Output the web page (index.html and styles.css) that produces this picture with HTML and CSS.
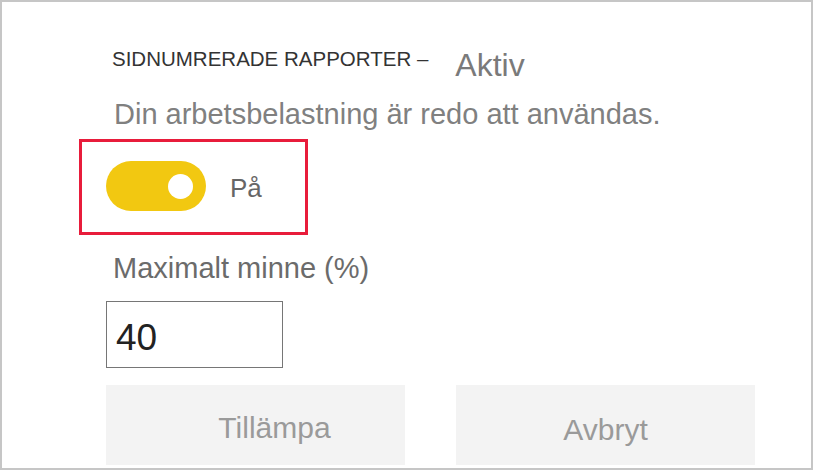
FILE: index.html
```html
<!DOCTYPE html>
<html lang="sv">
<head>
<meta charset="utf-8">
<title>Sidnumrerade rapporter</title>
<link rel="stylesheet" href="styles.css">
</head>
<body>
<div class="frame">
  <div class="header">
    <span class="title">SIDNUMRERADE RAPPORTER –</span>
    <span class="status">Aktiv</span>
  </div>
  <p class="message">Din arbetsbelastning är redo att användas.</p>
  <div class="highlight">
    <div class="toggle"><span class="knob"></span></div>
    <span class="toggle-label">På</span>
  </div>
  <label class="field-label" for="mem">Maximalt minne (%)</label>
  <div class="input" id="mem">40</div>
  <div class="actions">
    <div class="btn btn-apply">Tillämpa</div>
    <div class="btn btn-cancel">Avbryt</div>
  </div>
</div>
</body>
</html>
```
FILE: styles.css
```css
html, body {
  margin: 0;
  padding: 0;
  background: #ffffff;
}
.frame {
  width: 813px;
  height: 470px;
  box-sizing: border-box;
  border: 2px solid #c6c6c6;
  padding: 47px 0 0 104px;
  font-family: "Liberation Sans", Arial, sans-serif;
  overflow: hidden;
  display: flex;
  flex-direction: column;
  align-items: flex-start;
}
.header {
  display: flex;
  align-items: flex-start;
}
.title {
  margin: 0 0 0 6px;
  font-size: 20.5px;
  line-height: 20px;
  color: #333333;
}
.status {
  margin-left: 27px;
  font-size: 32px;
  line-height: 32px;
  color: #7a7a7a;
}
.message {
  margin: 16px 0 0 8px;
  font-size: 29px;
  line-height: 34px;
  color: #808080;
}
.highlight {
  margin: 8px 0 0 -27px;
  width: 229px;
  height: 96px;
  box-sizing: border-box;
  border: 3px solid #e81c3b;
  padding-left: 24px;
  display: flex;
  align-items: center;
}
.toggle {
  width: 100px;
  height: 50px;
  border-radius: 25px;
  background: #f2c811;
  display: flex;
  align-items: center;
  justify-content: flex-end;
  padding-right: 13px;
  box-sizing: border-box;
  margin-top: -2px;
}
.knob {
  width: 25px;
  height: 25px;
  border-radius: 50%;
  background: #ffffff;
}
.toggle-label {
  margin-left: 24px;
  font-size: 26px;
  line-height: 26px;
  color: #666666;
  margin-top: 2px;
}
.field-label {
  margin: 16px 0 0 7px;
  font-size: 29px;
  line-height: 34px;
  color: #6b6b6b;
}
.input {
  margin-top: 16px;
  width: 177px;
  height: 67px;
  box-sizing: border-box;
  border: 1px solid #767676;
  padding: 17px 0 0 9px;
  font-size: 37px;
  line-height: 37px;
  color: #222222;
}
.actions {
  margin-top: 17px;
  display: flex;
  gap: 51px;
}
.btn {
  width: 299px;
  height: 80px;
  background: #f3f3f3;
  display: flex;
  align-items: center;
  justify-content: center;
  box-sizing: border-box;
  font-size: 30px;
  line-height: 30px;
  color: #9a9a9a;
}
.btn-apply {
  padding: 5px 0 0 38px;
}
.btn-cancel {
  padding-top: 9px;
}
```
